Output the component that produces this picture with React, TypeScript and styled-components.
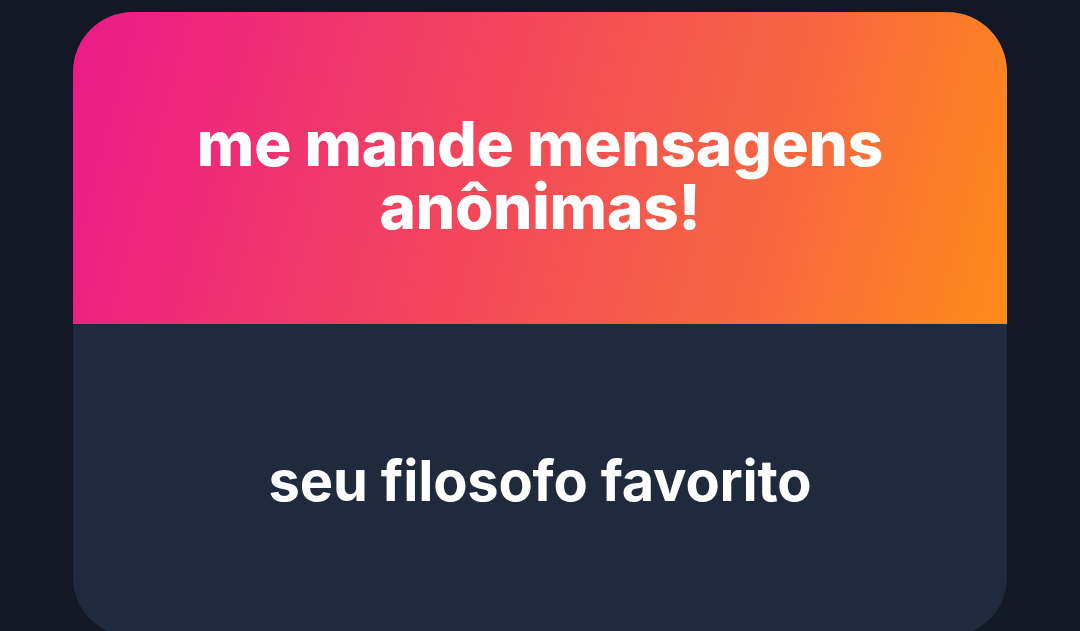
import React from "react";
import styled, { createGlobalStyle } from "styled-components";

const GlobalStyle = createGlobalStyle`
  html, body {
    margin: 0;
    padding: 0;
    background: #131827;
    font-family: Inter, "Noto Sans", sans-serif;
  }
  #root {
    min-height: 100vh;
  }
`;

const Page = styled.div`
  display: flex;
  justify-content: center;
  padding-top: 12px;
  height: 631px;
  overflow: hidden;
  box-sizing: border-box;
`;

const Card = styled.div`
  width: 934px;
  height: 625px;
  border-radius: 60px;
  overflow: hidden;
  display: flex;
  flex-direction: column;
  background: #1f2a3c;
  flex-shrink: 0;
`;

const Header = styled.div`
  height: 312px;
  background: linear-gradient(105deg, #ec1a89 0%, #f2435f 40%, #f7683f 75%, #ff8c18 100%);
  display: flex;
  align-items: center;
  justify-content: center;
  padding-top: 14px;
  box-sizing: border-box;
`;

const Title = styled.h1`
  margin: 0;
  color: #ffffff;
  font-family: Inter, "Noto Sans", sans-serif;
  font-weight: 800;
  font-size: 62px;
  line-height: 63px;
  letter-spacing: -0.2px;
  text-align: center;
`;

const Body = styled.div`
  flex: 1;
  display: flex;
  align-items: center;
  justify-content: center;
`;

const Prompt = styled.p`
  margin: 0;
  color: #ffffff;
  font-family: Inter, "Noto Sans", sans-serif;
  font-weight: 700;
  font-size: 56px;
  letter-spacing: -0.2px;
  text-align: center;
`;

export default function App() {
  return (
    <>
      <GlobalStyle />
      <Page>
        <Card>
          <Header>
            <Title>
              me mande mensagens
              <br />
              anônimas!
            </Title>
          </Header>
          <Body>
            <Prompt>seu filosofo favorito</Prompt>
          </Body>
        </Card>
      </Page>
    </>
  );
}
